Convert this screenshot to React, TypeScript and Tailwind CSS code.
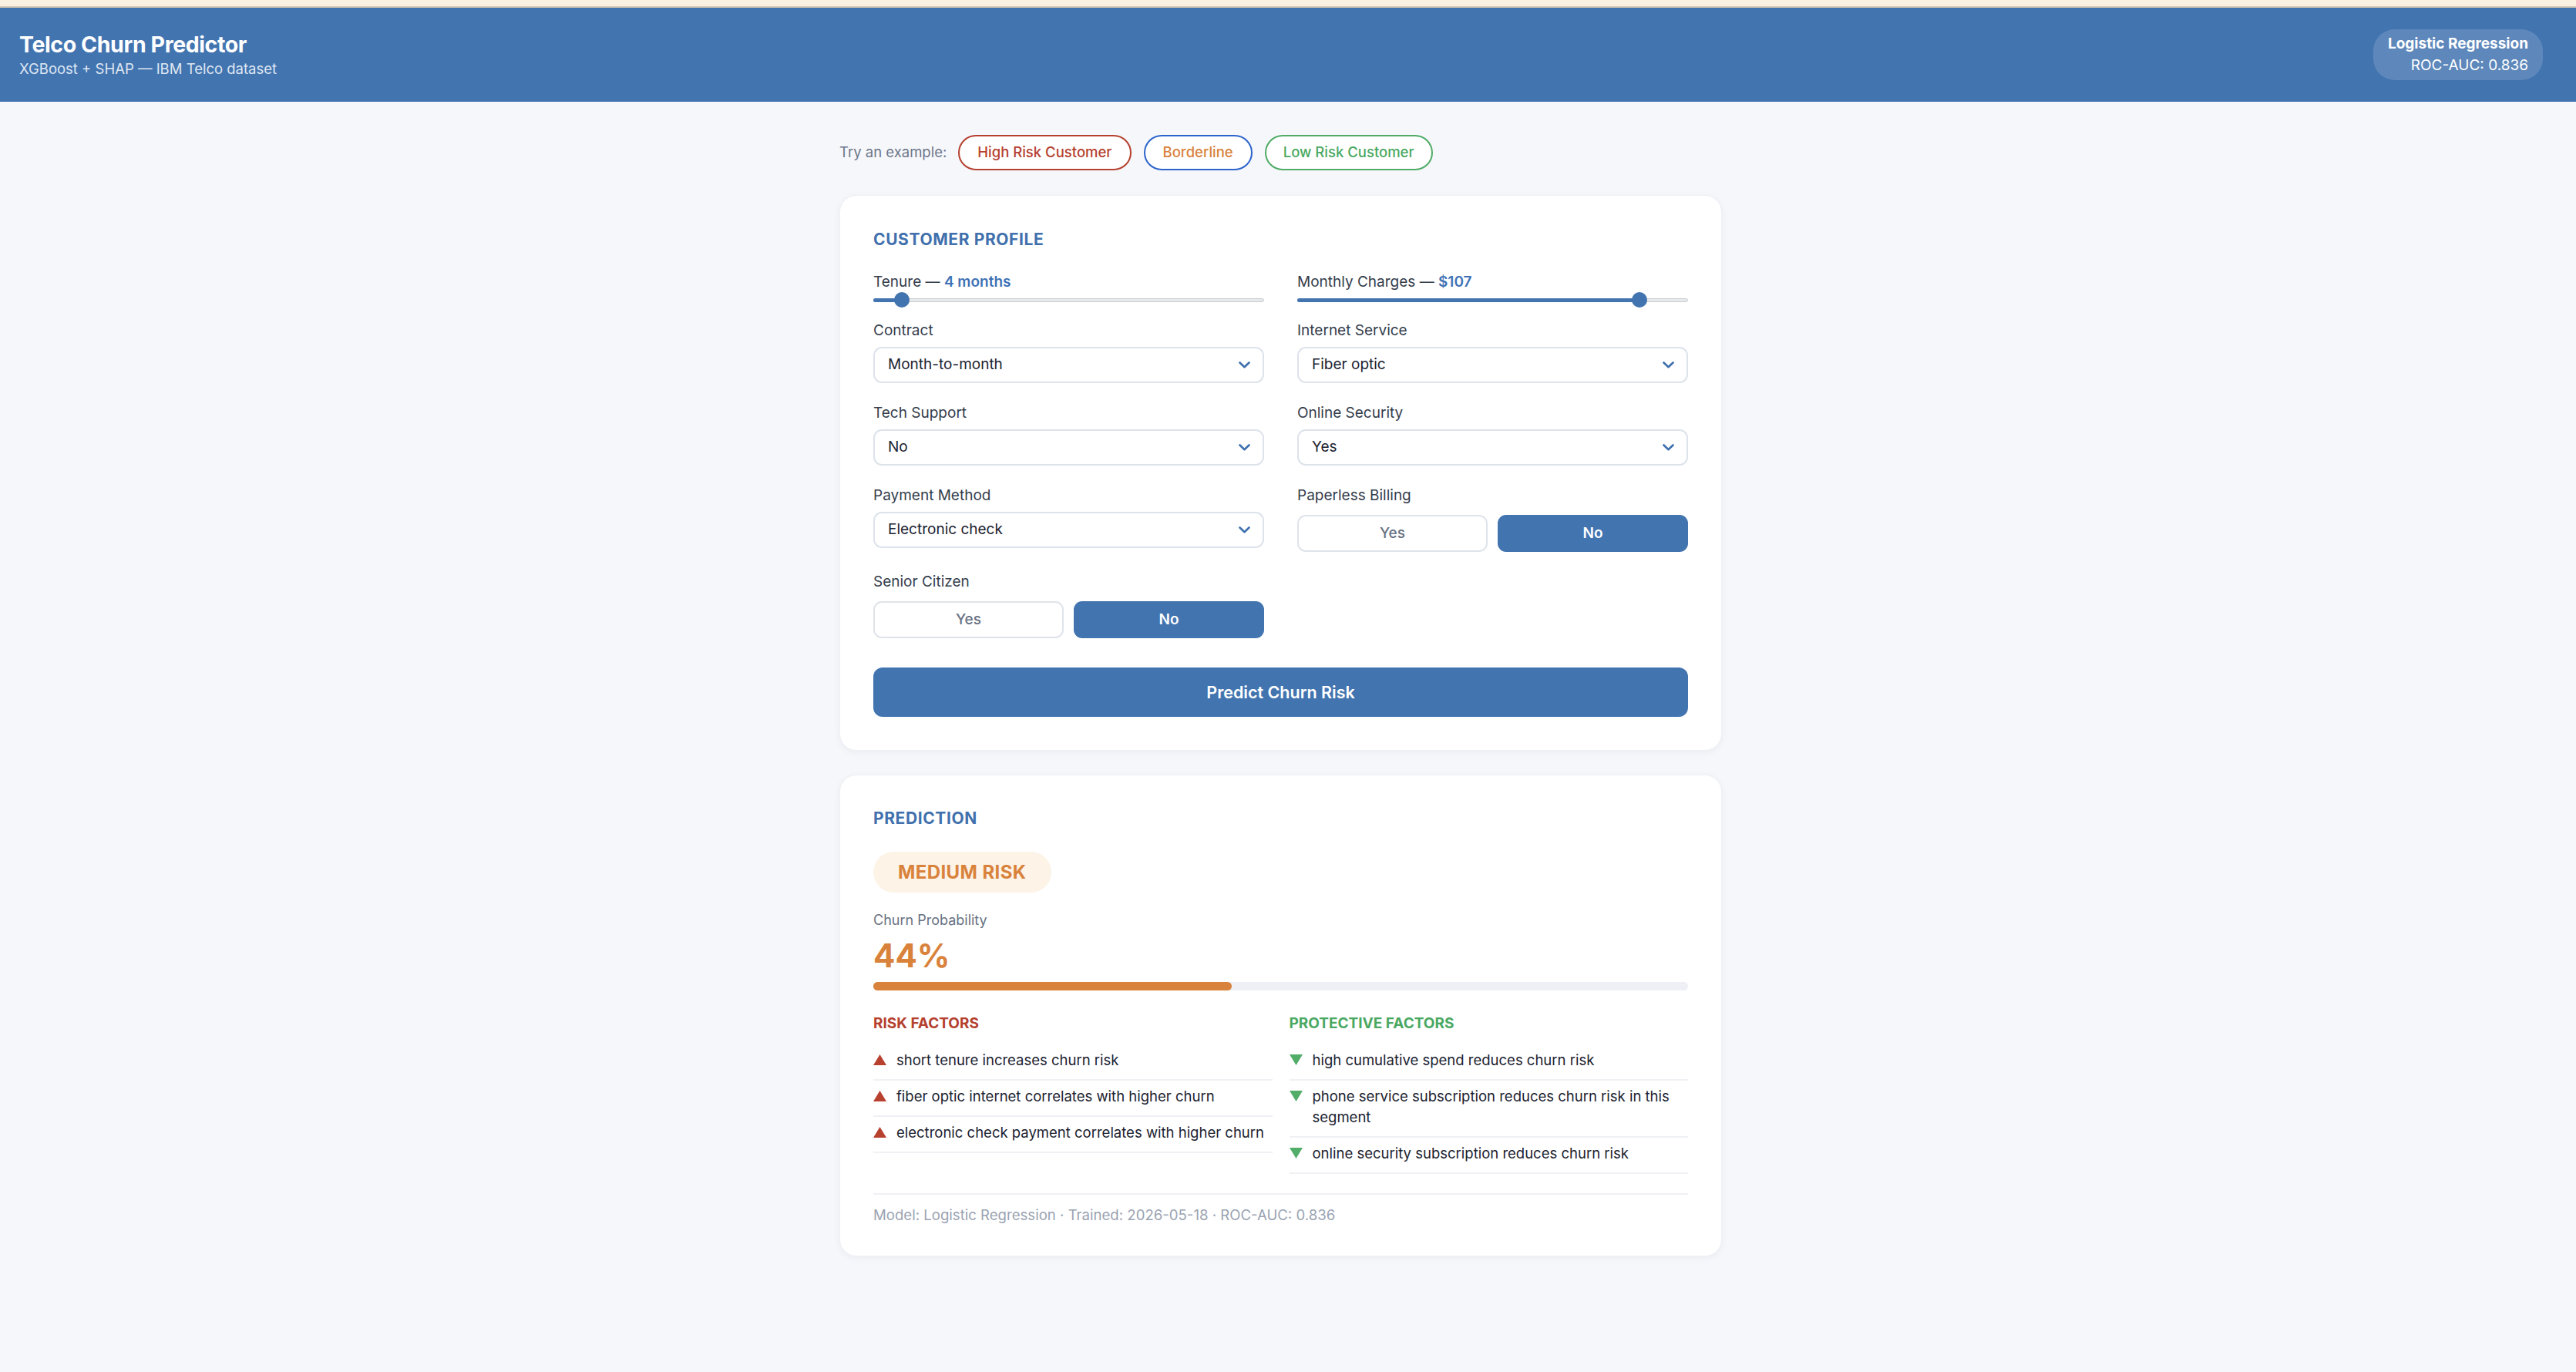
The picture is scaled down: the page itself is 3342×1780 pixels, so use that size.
// ─── Data ─────────────────────────────────────────────────────────────────────

const examples = [
  { label: "High Risk Customer", cls: "border-[#b5402f] text-[#b5402f] px-[23px]" },
  { label: "Borderline", cls: "border-[#2c64cc] text-[#d9823b] px-[23px]" },
  { label: "Low Risk Customer", cls: "border-[#4fab65] text-[#4aa862] px-[22px]" },
];

const riskFactors = [
  "short tenure increases churn risk",
  "fiber optic internet correlates with higher churn",
  "electronic check payment correlates with higher churn",
];

const protectiveFactors = [
  "high cumulative spend reduces churn risk",
  "phone service subscription reduces churn risk in this segment",
  "online security subscription reduces churn risk",
];

// ─── Small pieces ─────────────────────────────────────────────────────────────

function Label({ children }: { children: React.ReactNode }) {
  return <div className="text-[19px] leading-[26px] text-[#343d4c]">{children}</div>;
}

function Slider({ value, min, max }: { value: number; min: number; max: number }) {
  const frac = (value - min) / (max - min);
  const center = 10 + frac * 488;
  return (
    <div className="relative h-[20px] w-full">
      <div className="absolute left-0 right-0 top-[8px] h-[5px] rounded-full border border-[#c9cbcf] bg-[#e8e9eb]" />
      <div className="absolute left-0 top-[8px] h-[5px] rounded-full bg-[#4274b0]" style={{ width: center }} />
      <div
        className="absolute top-0 h-[20px] w-[20px] rounded-full bg-[#4274b0]"
        style={{ left: center - 10 }}
      />
    </div>
  );
}

function Select({ value }: { value: string }) {
  return (
    <div className="mt-[8px] flex h-[47px] items-center justify-between rounded-[11px] border-2 border-[#dde3eb] bg-white pl-[17px] pr-[16px] text-[19px] text-[#1b2230]">
      <span>{value}</span>
      <svg width="15" height="9" viewBox="0 0 15 9" className="shrink-0">
        <path d="M1.5 1.5 L7.5 7.2 L13.5 1.5" fill="none" stroke="#3e6fae" strokeWidth="2.6" strokeLinecap="round" strokeLinejoin="round" />
      </svg>
    </div>
  );
}

function Toggle({ active }: { active: "Yes" | "No" }) {
  return (
    <div className="mt-[12px] grid grid-cols-2 gap-[13px]">
      {(["Yes", "No"] as const).map((opt) =>
        opt === active ? (
          <div
            key={opt}
            className="flex h-[48px] items-center justify-center rounded-[11px] bg-[#4274b0] text-[19px] font-semibold text-white"
          >
            {opt}
          </div>
        ) : (
          <div
            key={opt}
            className="flex h-[48px] items-center justify-center rounded-[11px] border-2 border-[#dfe4eb] bg-white text-[19px] font-medium text-[#687283]"
          >
            {opt}
          </div>
        )
      )}
    </div>
  );
}

function FactorList({ items, kind }: { items: string[]; kind: "risk" | "protect" }) {
  return (
    <div>
      {items.map((t) => (
        <div
          key={t}
          className="flex items-start gap-[13px] border-b-2 border-[#f0f1f4] pb-[11px] pt-[7px] text-[18.5px] leading-[27px] text-[#1b2230]"
        >
          <svg width="17" height="14" viewBox="0 0 17 14" className="mt-[6px] shrink-0">
            {kind === "risk" ? (
              <polygon points="8.5,0 17,14 0,14" fill="#b8402f" />
            ) : (
              <polygon points="0,0 17,0 8.5,14" fill="#52ad68" />
            )}
          </svg>
          <span>{t}</span>
        </div>
      ))}
    </div>
  );
}

// ─── Main ─────────────────────────────────────────────────────────────────────

export default function App() {
  return (
    <div className="min-h-screen bg-[#f6f7fb] font-['Inter',sans-serif] text-[#1f2937]">
      {/* Browser strip */}
      <div className="h-[10px] border-b-2 border-[#d9cab5] bg-[#faf1e3]" />

      {/* Header */}
      <header className="flex h-[122px] items-center justify-between bg-[#4274b0] pl-[25px] pr-[43px] text-white">
        <div>
          <h1 className="text-[28.5px] font-bold leading-[36px] tracking-[-0.4px]">Telco Churn Predictor</h1>
          <p className="text-[18.5px] leading-[26px] text-[#dfe7f2]">XGBoost + SHAP — IBM Telco dataset</p>
        </div>
        <div className="rounded-[28px] bg-white/15 px-[19px] py-[5px] text-right">
          <div className="text-[19px] font-bold leading-[28px]">Logistic Regression</div>
          <div className="text-[19px] leading-[28px]">ROC-AUC: 0.836</div>
        </div>
      </header>

      <main className="flex justify-center pb-[60px] pr-[19px]">
        <div className="w-[1145px]">
          {/* Examples */}
          <div className="mt-[43px] flex items-center">
            <span className="mr-[15px] text-[18.5px] text-[#6c7689]">Try an example:</span>
            <div className="flex gap-[16px]">
              {examples.map((e) => (
                <button
                  key={e.label}
                  className={"flex h-[46px] items-center rounded-full border-2 bg-white text-[18.5px] font-medium " + e.cls}
                >
                  {e.label}
                </button>
              ))}
            </div>
          </div>

          {/* Customer profile */}
          <section className="mt-[32px] rounded-[22px] border border-[#eef0f4] bg-white p-[43px] shadow-[0_2px_10px_rgba(30,40,60,0.05)]">
            <h2 className="text-[21px] font-bold leading-[28px] tracking-[0.6px] text-[#4170ad]">CUSTOMER PROFILE</h2>

            <div className="mt-[28px] grid grid-cols-2 gap-x-[43px]">
              <div>
                <Label>
                  Tenure — <span className="font-semibold text-[#3f72b5]">4 months</span>
                </Label>
                <Slider value={4} min={0} max={72} />
              </div>
              <div>
                <Label>
                  Monthly Charges — <span className="font-semibold text-[#3f72b5]">$107</span>
                </Label>
                <Slider value={107} min={18} max={118} />
              </div>
            </div>

            <div className="mt-[17px] grid grid-cols-2 gap-x-[43px]">
              <div>
                <Label>Contract</Label>
                <Select value="Month-to-month" />
              </div>
              <div>
                <Label>Internet Service</Label>
                <Select value="Fiber optic" />
              </div>
            </div>

            <div className="mt-[26px] grid grid-cols-2 gap-x-[43px]">
              <div>
                <Label>Tech Support</Label>
                <Select value="No" />
              </div>
              <div>
                <Label>Online Security</Label>
                <Select value="Yes" />
              </div>
            </div>

            <div className="mt-[26px] grid grid-cols-2 gap-x-[43px]">
              <div>
                <Label>Payment Method</Label>
                <Select value="Electronic check" />
              </div>
              <div>
                <Label>Paperless Billing</Label>
                <Toggle active="No" />
              </div>
            </div>

            <div className="mt-[26px] grid grid-cols-2 gap-x-[43px]">
              <div>
                <Label>Senior Citizen</Label>
                <Toggle active="No" />
              </div>
            </div>

            <button className="mt-[38px] flex h-[64px] w-full items-center justify-center rounded-[12px] bg-[#4274b0] text-[21.5px] font-semibold text-white">
              Predict Churn Risk
            </button>
          </section>

          {/* Prediction */}
          <section className="mt-[31px] rounded-[22px] border border-[#eef0f4] bg-white px-[43px] pb-[41px] pt-[42px] shadow-[0_2px_10px_rgba(30,40,60,0.05)]">
            <h2 className="text-[21px] font-bold leading-[28px] tracking-[0.6px] text-[#4170ad]">PREDICTION</h2>

            <div className="mt-[29px] inline-flex h-[53px] items-center rounded-full bg-[#fdf3e7] px-[32px] text-[24px] font-bold tracking-[0.4px] text-[#d9823b]">
              MEDIUM RISK
            </div>

            <div className="mt-[24px] text-[18px] leading-[24px] text-[#687283]">Churn Probability</div>
            <div className="mt-[10px] text-[42px] font-bold leading-[48px] text-[#d9823b]">44%</div>

            <div className="mt-[10px] h-[11px] w-full rounded-full bg-[#eef0f5]">
              <div className="h-full rounded-full bg-[#d9823b]" style={{ width: "44%" }} />
            </div>

            <div className="mt-[30px] grid grid-cols-2 gap-x-[22px]">
              <div>
                <h3 className="mb-[14px] text-[19px] font-bold leading-[26px] text-[#b5402f]">RISK FACTORS</h3>
                <FactorList items={riskFactors} kind="risk" />
              </div>
              <div>
                <h3 className="mb-[14px] text-[19px] font-bold leading-[26px] text-[#4aa862]">PROTECTIVE FACTORS</h3>
                <FactorList items={protectiveFactors} kind="protect" />
              </div>
            </div>

            <div className="mt-[25px] border-t-2 border-[#eef0f3] pt-[14px] text-[18.6px] leading-[24px] text-[#9aa3b2]">
              Model: Logistic Regression · Trained: 2026-05-18 · ROC-AUC: 0.836
            </div>
          </section>
        </div>
      </main>
    </div>
  );
}
